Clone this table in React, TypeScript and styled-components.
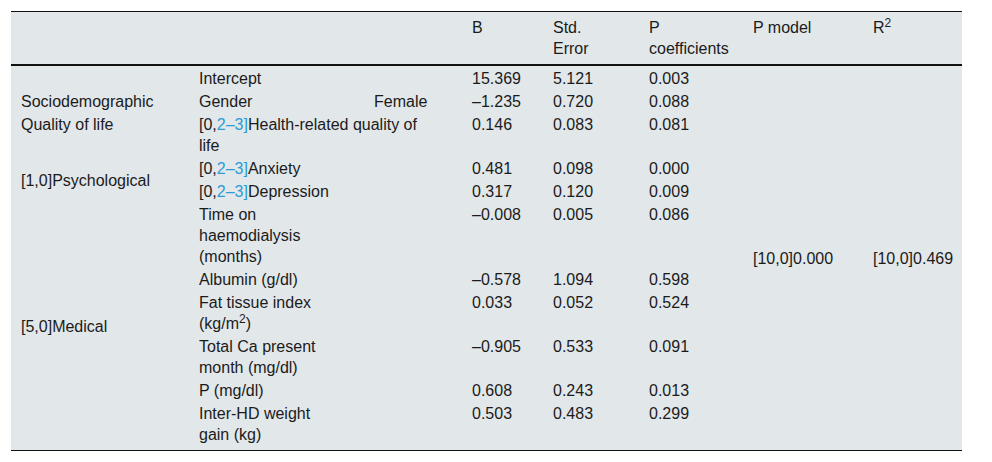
import React from 'react';
import styled, { createGlobalStyle } from 'styled-components';

const GlobalStyle = createGlobalStyle`
    html, body {
        margin: 0;
        padding: 0;
        background: #ffffff;
    }
    body {
        font-family: "Liberation Sans", Arial, sans-serif;
        color: #1b1b1b;
    }
`;

const Page = styled.div`
    padding: 11px 30px 11px 11px;
`;

const Table = styled.table`
    width: 951px;
    table-layout: fixed;
    border-collapse: collapse;
    background: #e2e7ea;
    font-size: 16px;
    line-height: 21px;
    border-top: 1px solid #111;
    border-bottom: 1px solid #111;
`;

const HeadRow = styled.tr`
    border-bottom: 2px solid #111;
`;

const HeadCell = styled.th`
    text-align: left;
    font-weight: normal;
    vertical-align: top;
    padding: 5px 10px 5px;
`;

const Cell = styled.td<{ $middle?: boolean; $indent?: number; $padRight?: number }>`
    vertical-align: ${({ $middle }) => ($middle ? 'middle' : 'top')};
    padding: 1px ${({ $padRight }) => $padRight ?? 10}px 1px ${({ $indent }) => $indent ?? 10}px;
`;

const FirstRow = styled.tr`
    td {
        padding-top: 2px;
    }
`;

const LastRow = styled.tr`
    td {
        padding-bottom: 5px;
    }
`;

const Ref = styled.span`
    color: #2f9bd6;
`;

const Sup = styled.sup`
    font-size: 12px;
    line-height: 0;
    vertical-align: 6px;
`;

const widths = [178, 158, 115, 81, 96, 104, 120, 99];

const Cite = () => (
    <>
        [0,<Ref>2–3]</Ref>
    </>
);

const RegressionTable: React.FC = () => (
    <Table>
        <colgroup>
            {widths.map((w, i) => (
                <col key={i} style={{ width: w }} />
            ))}
        </colgroup>
        <thead>
            <HeadRow>
                <HeadCell />
                <HeadCell />
                <HeadCell />
                <HeadCell>B</HeadCell>
                <HeadCell>
                    Std.
                    <br />
                    Error
                </HeadCell>
                <HeadCell>P coefficients</HeadCell>
                <HeadCell>P model</HeadCell>
                <HeadCell>
                    R<Sup>2</Sup>
                </HeadCell>
            </HeadRow>
        </thead>
        <tbody>
            <FirstRow>
                <Cell />
                <Cell>Intercept</Cell>
                <Cell />
                <Cell>15.369</Cell>
                <Cell>5.121</Cell>
                <Cell>0.003</Cell>
                <Cell $middle rowSpan={11}>
                    [10,0]0.000
                </Cell>
                <Cell $middle rowSpan={11}>
                    [10,0]0.469
                </Cell>
            </FirstRow>
            <tr>
                <Cell>Sociodemographic</Cell>
                <Cell>Gender</Cell>
                <Cell $indent={27}>Female</Cell>
                <Cell>–1.235</Cell>
                <Cell>0.720</Cell>
                <Cell>0.088</Cell>
            </tr>
            <tr>
                <Cell>Quality of life</Cell>
                <Cell colSpan={2} $padRight={30}>
                    <Cite />
                    Health-related quality of life
                </Cell>
                <Cell>0.146</Cell>
                <Cell>0.083</Cell>
                <Cell>0.081</Cell>
            </tr>
            <tr>
                <Cell $middle rowSpan={2}>
                    [1,0]Psychological
                </Cell>
                <Cell colSpan={2}>
                    <Cite />
                    Anxiety
                </Cell>
                <Cell>0.481</Cell>
                <Cell>0.098</Cell>
                <Cell>0.000</Cell>
            </tr>
            <tr>
                <Cell colSpan={2}>
                    <Cite />
                    Depression
                </Cell>
                <Cell>0.317</Cell>
                <Cell>0.120</Cell>
                <Cell>0.009</Cell>
            </tr>
            <tr>
                <Cell $middle rowSpan={6}>
                    [5,0]Medical
                </Cell>
                <Cell>Time on haemodialysis (months)</Cell>
                <Cell />
                <Cell>–0.008</Cell>
                <Cell>0.005</Cell>
                <Cell>0.086</Cell>
            </tr>
            <tr>
                <Cell>Albumin (g/dl)</Cell>
                <Cell />
                <Cell>–0.578</Cell>
                <Cell>1.094</Cell>
                <Cell>0.598</Cell>
            </tr>
            <tr>
                <Cell>
                    Fat tissue index (kg/m<Sup>2</Sup>)
                </Cell>
                <Cell />
                <Cell>0.033</Cell>
                <Cell>0.052</Cell>
                <Cell>0.524</Cell>
            </tr>
            <tr>
                <Cell>Total Ca present month (mg/dl)</Cell>
                <Cell />
                <Cell>–0.905</Cell>
                <Cell>0.533</Cell>
                <Cell>0.091</Cell>
            </tr>
            <tr>
                <Cell>P (mg/dl)</Cell>
                <Cell />
                <Cell>0.608</Cell>
                <Cell>0.243</Cell>
                <Cell>0.013</Cell>
            </tr>
            <LastRow>
                <Cell>Inter-HD weight gain (kg)</Cell>
                <Cell />
                <Cell>0.503</Cell>
                <Cell>0.483</Cell>
                <Cell>0.299</Cell>
            </LastRow>
        </tbody>
    </Table>
);

export default function App() {
    return (
        <>
            <GlobalStyle />
            <Page>
                <RegressionTable />
            </Page>
        </>
    );
}
